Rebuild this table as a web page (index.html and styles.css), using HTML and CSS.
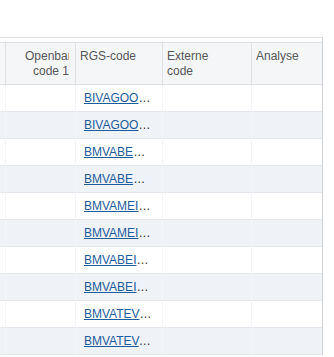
FILE: index.html
```html
<!DOCTYPE html>
<html>
<head>
  <title>Grootboekrekeningen</title>
  <link rel="stylesheet" href="styles.css">
</head>
<body>
  <div class="grid-wrap">
    <table class="grid">
      <colgroup>
        <col class="col-cut">
        <col class="col-open">
        <col class="col-rgs">
        <col class="col-ext">
        <col class="col-ana">
      </colgroup>
      <thead>
        <tr>
          <th class="cut"></th>
          <th class="num"><div class="hd-label">Openbare code 1</div></th>
          <th><div class="hd-label">RGS-code</div></th>
          <th><div class="hd-label">Externe code</div></th>
          <th class="last"><div class="hd-label">Analyse</div></th>
        </tr>
      </thead>
      <tbody>
        <tr><td></td><td></td><td class="rgs"><a href="#">BIVAGOODVVP</a></td><td></td><td class="last"></td></tr>
        <tr class="alt"><td></td><td></td><td class="rgs"><a href="#">BIVAGOODAFS</a></td><td></td><td class="last"></td></tr>
        <tr><td></td><td></td><td class="rgs"><a href="#">BMVABEDVVP</a></td><td></td><td class="last"></td></tr>
        <tr class="alt"><td></td><td></td><td class="rgs"><a href="#">BMVABEDAFS</a></td><td></td><td class="last"></td></tr>
        <tr><td></td><td></td><td class="rgs"><a href="#">BMVAMEIVVP</a></td><td></td><td class="last"></td></tr>
        <tr class="alt"><td></td><td></td><td class="rgs"><a href="#">BMVAMEIAFS</a></td><td></td><td class="last"></td></tr>
        <tr><td></td><td></td><td class="rgs"><a href="#">BMVABEIVVP</a></td><td></td><td class="last"></td></tr>
        <tr class="alt"><td></td><td></td><td class="rgs"><a href="#">BMVABEIAFS</a></td><td></td><td class="last"></td></tr>
        <tr><td></td><td></td><td class="rgs"><a href="#">BMVATEVVVP</a></td><td></td><td class="last"></td></tr>
        <tr class="alt"><td></td><td></td><td class="rgs"><a href="#">BMVATEVAFS</a></td><td></td><td class="last"></td></tr>
      </tbody>
    </table>
  </div>
</body>
</html>
```

FILE: styles.css
```css
body {
  margin: 0;
  background-color: #ffffff;
  font-family: "Liberation Sans", Arial, sans-serif;
  font-size: 12px;
  color: #333333;
}

.grid-wrap {
  margin-top: 37px;
  width: 322px;
  padding-top: 4px;
  border-top: 1px solid #dfe1e4;
  border-right: 1px solid #cfd2d6;
}

.grid {
  width: 322px;
  table-layout: fixed;
  border-collapse: separate;
  border-spacing: 0;
}

.grid .col-cut { width: 6px; }
.grid .col-open { width: 70px; }
.grid .col-rgs { width: 87px; }
.grid .col-ext { width: 89px; }
.grid .col-ana { width: 70px; }

.grid th {
  background-color: #f5f6f8;
  border-top: 1px solid #dfe1e5;
  border-bottom: 1px solid #dfe1e5;
  border-right: 1px solid #dfe1e5;
  padding: 6px 20px 5px 4px;
  vertical-align: top;
  text-align: left;
  font-weight: normal;
  line-height: 15px;
  color: #55575c;
}

.grid th.cut {
  padding: 0;
}

.grid th.num {
  padding: 6px 6px 5px 19px;
  text-align: right;
}

.grid th.last,
.grid td.last {
  border-right: none;
}

.hd-label {
  overflow: hidden;
}

.grid td {
  height: 26px;
  padding: 0 9px 0 8px;
  line-height: 26px;
  border-bottom: 1px solid #e4e7eb;
  border-right: 1px solid #f3f5f8;
  white-space: nowrap;
  overflow: hidden;
  text-overflow: ellipsis;
}

.grid td:first-child {
  padding: 0;
}

.grid tr.alt td {
  background-color: #eff2f7;
}

.grid td.rgs a {
  color: #1d5c9c;
  text-decoration: underline;
}
```
